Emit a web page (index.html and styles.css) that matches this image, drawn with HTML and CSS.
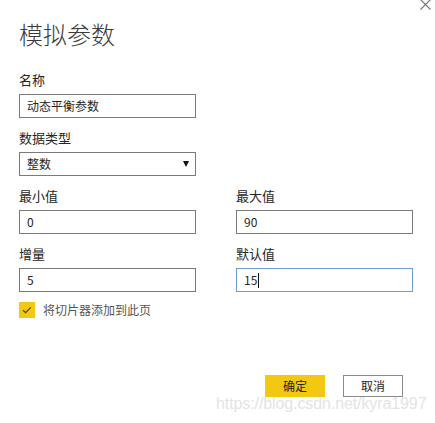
FILE: index.html
```html
<!DOCTYPE html>
<html lang="zh-CN">
<head>
<meta charset="utf-8">
<title>模拟参数</title>
<link rel="stylesheet" href="styles.css">
</head>
<body>
<div class="dialog">
  <button class="close" aria-label="关闭">
    <svg width="11" height="11" viewBox="0 0 11 11"><path d="M0.5 0.5 L10.5 10.5 M10.5 0.5 L0.5 10.5" stroke="#7a7a7a" stroke-width="1.2" fill="none"/></svg>
  </button>
  <h1 class="title">模拟参数</h1>
  <div class="form">
    <div class="field">
      <label class="label">名称</label>
      <div class="input">动态平衡参数</div>
    </div>
    <div class="spacer"></div>
    <div class="field">
      <label class="label">数据类型</label>
      <div class="input select"><span>整数</span><span class="arrow"></span></div>
    </div>
    <div class="spacer"></div>
    <div class="field">
      <label class="label">最小值</label>
      <div class="input">0</div>
    </div>
    <div class="field">
      <label class="label">最大值</label>
      <div class="input">90</div>
    </div>
    <div class="field">
      <label class="label">增量</label>
      <div class="input">5</div>
    </div>
    <div class="field">
      <label class="label">默认值</label>
      <div class="input focus">15<span class="caret"></span></div>
    </div>
  </div>
  <div class="check">
    <span class="box">
      <svg width="16" height="16" viewBox="0 0 16 16"><path d="M4 8.2 L6.6 10.6 L11.8 5.4" stroke="#5a4a10" stroke-width="1.3" fill="none"/></svg>
    </span>
    <span class="check-label">将切片器添加到此页</span>
  </div>
  <div class="actions">
    <button class="btn primary">确定</button>
    <button class="btn">取消</button>
  </div>
  <div class="watermark">https://blog.csdn.net/kyra1997</div>
</div>
</body>
</html>
```
FILE: styles.css
```css
* { box-sizing: border-box; }
html, body {
  margin: 0;
  padding: 0;
  background: #ffffff;
}
body {
  font-family: "Noto Sans CJK SC", "Noto Sans", sans-serif;
  color: #252525;
}
.dialog {
  position: relative;
  width: 435px;
  height: 423px;
  padding: 18px 0 0 19px;
}
.close {
  position: absolute;
  top: -1px;
  right: 4px;
  width: 11px;
  height: 11px;
  padding: 0;
  border: none;
  background: none;
  line-height: 0;
}
.title {
  margin: 0 0 21px 0;
  font-size: 24px;
  font-weight: 300;
  line-height: 32px;
  color: #3a3a3a;
}
.form {
  display: grid;
  grid-template-columns: 177px 177px;
  column-gap: 40px;
  row-gap: 11px;
}
.field {
  display: flex;
  flex-direction: column;
}
.label {
  font-size: 13px;
  line-height: 18px;
  height: 18px;
  margin-bottom: 5px;
  color: #252525;
}
.input {
  height: 24px;
  border: 1px solid #7a7a7a;
  padding: 0 7px;
  font-size: 12px;
  line-height: 22px;
  color: #252525;
  display: flex;
  align-items: center;
}
.input.focus {
  border-color: #6e9ad6;
}
.caret {
  display: inline-block;
  width: 1px;
  height: 15px;
  background: #111;
  margin-left: 1px;
}
.select {
  justify-content: space-between;
}
.arrow {
  width: 0;
  height: 0;
  border-left: 3.5px solid transparent;
  border-right: 3.5px solid transparent;
  border-top: 6px solid #111;
  margin-right: -1px;
}
.check {
  display: flex;
  align-items: center;
  margin-top: 10px;
  height: 16px;
}
.box {
  width: 16px;
  height: 16px;
  background: #f2c811;
  line-height: 0;
}
.check-label {
  margin-left: 8px;
  font-size: 12px;
  line-height: 16px;
  color: #555555;
}
.actions {
  display: flex;
  gap: 18px;
  margin: 57px 0 0 246px;
}
.btn {
  width: 60px;
  height: 22px;
  padding: 0;
  border: 1px solid #8a8a8a;
  background: #ffffff;
  font-family: "Noto Sans CJK SC", "Noto Sans", sans-serif;
  font-size: 12px;
  line-height: 20px;
  color: #252525;
}
.btn.primary {
  background: #f2c811;
  border-color: #f2c811;
}
.watermark {
  position: absolute;
  left: 216px;
  top: 395px;
  font-family: "Liberation Sans", Arial, sans-serif;
  font-size: 16px;
  line-height: 18px;
  color: #e4e4e4;
  letter-spacing: -0.1px;
  white-space: nowrap;
}
```
